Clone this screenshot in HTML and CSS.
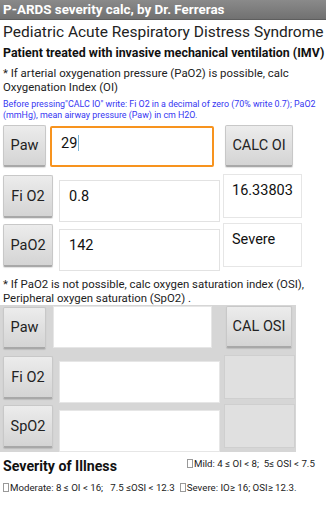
FILE: index.html
```html
<!DOCTYPE html>
<html>
<head>
<meta charset="utf-8">
<link rel="stylesheet" href="styles.css">
</head>
<body>
<div class="titlebar">P-ARDS severity calc, by Dr. Ferreras</div>
<div class="head">
  <div class="h1">Pediatric Acute Respiratory Distress Syndrome</div>
  <div class="h2">Patient treated with invasive mechanical ventilation (IMV)</div>
  <div class="note">* If arterial oxygenation pressure (PaO2) is possible, calc Oxygenation Index (OI)</div>
  <div class="blue">Before pressing"CALC IO" write: Fi O2 in a decimal of zero (70% write 0.7); PaO2 (mmHg), mean airway pressure (Paw) in cm H2O.</div>
</div>
<div class="sec1">
  <div class="row r1">
    <div class="btn b-paw">Paw</div>
    <div class="inp focus"><span>29</span><i class="caret"></i></div>
    <div class="btn b-calc">CALC OI</div>
  </div>
  <div class="row r2">
    <div class="btn b-wide">Fi O2</div>
    <div class="inp inp2">0.8</div>
    <div class="out">16.33803</div>
  </div>
  <div class="row r2">
    <div class="btn b-wide">PaO2</div>
    <div class="inp inp2">142</div>
    <div class="out">Severe</div>
  </div>
</div>
<div class="note note2">* If PaO2 is not possible, calc oxygen saturation index (OSI), Peripheral oxygen saturation (SpO2) .</div>
<div class="sec2">
  <div class="row r1b">
    <div class="btn b-paw">Paw</div>
    <div class="inp inpa"></div>
    <div class="btn b-calc2">CAL OSI</div>
  </div>
  <div class="row r2">
    <div class="btn b-wide">Fi O2</div>
    <div class="inp inp2"></div>
    <div class="out out-g"></div>
  </div>
  <div class="row r2">
    <div class="btn b-wide">SpO2</div>
    <div class="inp inp2"></div>
    <div class="out out-g"></div>
  </div>
</div>
<div class="foot">
  <div class="frow">
    <div class="sev">Severity of Illness</div>
    <div class="small mild"><i class="tofu"></i>Mild: 4 ≤ OI &lt; 8;&nbsp; 5≤ OSI &lt; 7.5</div>
  </div>
  <div class="frow frow2">
    <div class="small"><i class="tofu"></i>Moderate: 8 ≤ OI &lt; 16;&nbsp;&nbsp; 7.5 ≤OSI &lt; 12.3</div>
    <div class="small sev2"><i class="tofu"></i>Severe: IO≥ 16; OSI≥ 12.3.</div>
  </div>
</div>
</body>
</html>
```
FILE: styles.css
```css
html, body {
  margin: 0;
  padding: 0;
  background: #ffffff;
  font-family: Roboto, "Noto Sans", sans-serif;
  color: #222;
  width: 326px;
  overflow: hidden;
}
.titlebar {
  height: 20px;
  line-height: 20px;
  background: linear-gradient(#8a8a8a, #717171);
  border-bottom: 1px solid #5e5e5e;
  color: #fff;
  font-weight: bold;
  font-size: 13.4px;
  padding-left: 3px;
  box-sizing: border-box;
}
.head {
  padding-left: 3px;
}
.h1 {
  font-size: 15.5px;
  line-height: 20px;
  margin-top: 2px;
  color: #222;
}
.h2 {
  font-size: 12.4px;
  font-weight: bold;
  line-height: 20px;
  margin-top: 1px;
  color: #111;
}
.note {
  font-size: 11.4px;
  line-height: 14px;
  margin-top: 3px;
  color: #222;
}
.blue {
  font-size: 8.9px;
  line-height: 11px;
  margin-top: 5px;
  color: #3636f2;
}
.sec1 {
  margin-top: 4px;
}
.row {
  display: flex;
  align-items: flex-start;
}
.r1 {
  height: 49px;
}
.r2 {
  height: 49px;
}
.btn {
  box-sizing: border-box;
  background: linear-gradient(#ececec, #d4d4d4);
  border: 1px solid #c8c8c8;
  border-bottom: 2px solid #a8a8a8;
  border-radius: 2px;
  font-size: 14.5px;
  color: #222;
  display: flex;
  align-items: center;
  justify-content: center;
  box-shadow: 0 1px 1px rgba(0,0,0,0.12);
}
.b-paw {
  margin-left: 3px;
  width: 43px;
  height: 42px;
}
.b-wide {
  margin-left: 3px;
  width: 50px;
  height: 43px;
  margin-top: 1px;
}
.b-calc {
  margin-left: 11px;
  width: 68px;
  height: 42px;
}
.b-calc2 {
  margin-left: 14px;
  width: 66px;
  height: 42px;
}
.inp {
  box-sizing: border-box;
  background: #fff;
  border: 1px solid #e2e2e2;
  font-size: 14.5px;
  color: #111;
  padding-left: 9px;
  padding-top: 7px;
  display: flex;
  align-items: flex-start;
}
.focus {
  margin-left: 4px;
  width: 164px;
  height: 41px;
  margin-top: 1px;
  border: 2px solid #f7931e;
  border-radius: 2px;
  padding-top: 7px;
  padding-left: 9px;
}
.caret {
  display: inline-block;
  width: 1px;
  height: 16px;
  background: #7ab6d8;
  margin-left: 1px;
}
.inp2 {
  margin-left: 6px;
  width: 161px;
  height: 42px;
  margin-top: 6px;
}
.out {
  box-sizing: border-box;
  margin-left: 3px;
  width: 79px;
  height: 44px;
  background: #fff;
  border: 1px solid #e6e6e6;
  font-size: 14.5px;
  padding: 7px 0 0 8px;
  color: #111;
}
.note2 {
  padding-left: 3px;
  margin-top: 5px;
}
.sec2 {
  margin-top: 0;
  width: 296px;
  background: #d6d6d6;
  padding-top: 1px;
  height: 147px;
  box-sizing: border-box;
  overflow: hidden;
}
.r1b {
  height: 49px;
}
.r1b .b-paw {
  margin-top: 1px;
}
.inpa {
  margin-left: 7px;
  width: 159px;
  height: 42px;
  border-color: #e6e6e6;
}
.sec2 .inp2 {
  border-color: #e6e6e6;
}
.out-g {
  margin-left: 4px;
  width: 71px;
  background: #e0e0e0;
  border: 1px solid #cfcfcf;
}
.foot {
  padding-left: 3px;
}
.frow {
  display: flex;
  align-items: center;
  margin-top: 4px;
}
.frow2 {
  margin-top: 6px;
}
.sev {
  font-size: 14.2px;
  font-weight: bold;
  color: #111;
  line-height: 20px;
}
.small {
  font-size: 9.7px;
  color: #222;
  line-height: 12px;
}
.mild {
  margin-left: 70px;
  margin-top: -4px;
}
.sev2 {
  margin-left: 5px;
}
.tofu {
  display: inline-block;
  width: 4px;
  height: 7px;
  border: 1px solid #999;
  margin-right: 1px;
  vertical-align: -1px;
}
```
